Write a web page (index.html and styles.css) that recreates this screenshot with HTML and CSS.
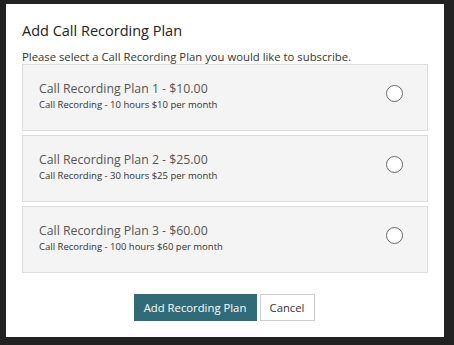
FILE: index.html
```html
<!DOCTYPE html>
<html lang="en">
<head>
    <meta charset="UTF-8">
    <title>Add Call Recording Plan</title>
    <link rel="stylesheet" href="styles.css">
</head>
<body>
<div class="modal">
    <h2 class="modal-title">Add Call Recording Plan</h2>
    <p class="modal-intro">Please select a Call Recording Plan you would like to subscribe.</p>

    <ul class="plan-list">
        <li class="plan">
            <div class="plan-info">
                <div class="plan-name">Call Recording Plan 1 - $10.00</div>
                <div class="plan-desc">Call Recording - 10 hours $10 per month</div>
            </div>
            <span class="radio"></span>
        </li>
        <li class="plan">
            <div class="plan-info">
                <div class="plan-name">Call Recording Plan 2 - $25.00</div>
                <div class="plan-desc">Call Recording - 30 hours $25 per month</div>
            </div>
            <span class="radio"></span>
        </li>
        <li class="plan">
            <div class="plan-info">
                <div class="plan-name">Call Recording Plan 3 - $60.00</div>
                <div class="plan-desc">Call Recording - 100 hours $60 per month</div>
            </div>
            <span class="radio"></span>
        </li>
    </ul>

    <div class="buttons">
        <button class="btn btn-primary">Add Recording Plan</button>
        <button class="btn btn-default">Cancel</button>
    </div>
</div>
</body>
</html>
```
FILE: styles.css
```css
html, body {
    margin: 0;
    padding: 0;
}

body {
    background-color: #222;
    font-family: "Open Sans", "DejaVu Sans", sans-serif;
    color: #333;
    width: 454px;
    height: 345px;
    overflow: hidden;
}

.modal {
    box-sizing: border-box;
    width: 438px;
    height: 333px;
    margin: 4px 0 0 6px;
    padding: 17px 16px 0 16px;
    background-color: #fff;
}

.modal-title {
    margin: 0;
    font-size: 14.5px;
    font-weight: normal;
    line-height: 20px;
    color: #222;
}

.modal-intro {
    margin: 8px 0 0 0;
    font-size: 11.3px;
    line-height: 15px;
    color: #333;
}

.plan-list {
    list-style: none;
    margin: 0;
    padding: 0;
    display: flex;
    flex-direction: column;
    gap: 4px;
}

.plan {
    box-sizing: border-box;
    height: 67px;
    display: flex;
    align-items: flex-start;
    justify-content: space-between;
    padding: 15px 24px 0 16px;
    background-color: #f4f4f4;
    border: 1px solid #ddd;
}

.plan-name {
    font-size: 12.3px;
    line-height: 18px;
    color: #555;
}

.plan-desc {
    margin-top: 0;
    font-size: 9.5px;
    line-height: 14px;
    color: #333;
}

.radio {
    box-sizing: border-box;
    width: 17px;
    height: 17px;
    border: 1px solid #666;
    border-radius: 50%;
    background-color: #fff;
    margin-top: 5px;
}

.buttons {
    display: flex;
    justify-content: center;
    gap: 3px;
    margin-top: 21px;
    padding-right: 2px;
}

.btn {
    box-sizing: border-box;
    height: 27px;
    padding: 0;
    font-family: "Open Sans", "DejaVu Sans", sans-serif;
    font-size: 11.3px;
    white-space: nowrap;
    border: 1px solid;
    border-radius: 0;
    cursor: pointer;
}

.btn-primary {
    width: 123px;
    background-color: #316b78;
    border-color: #316b78;
    color: #fff;
}

.btn-default {
    width: 55px;
    background-color: #fff;
    border-color: #ccc;
    color: #333;
}
```
